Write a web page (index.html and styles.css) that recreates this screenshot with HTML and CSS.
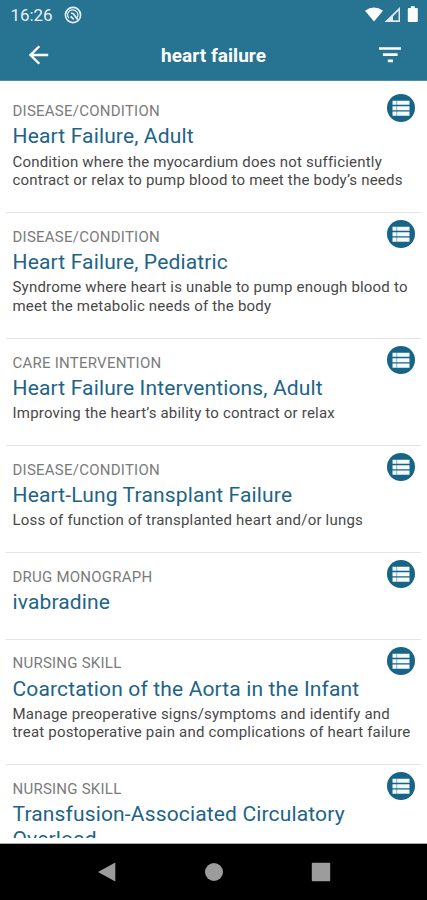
FILE: index.html
```html
<!DOCTYPE html>
<html lang="en">
<head>
<meta charset="utf-8">
<title>heart failure</title>
<link rel="stylesheet" href="styles.css">
</head>
<body>
<svg class="defs" width="0" height="0">
  <symbol id="list" viewBox="0 0 28 28">
    <circle cx="14" cy="14" r="14" fill="#176487"/>
    <path d="M5.5 6.7h17v4.1h-17zM5.5 12.2h17v4h-17zM5.5 17.6h17v4.1h-17z" fill="#f4f9fb"/>
    <path d="M9.7 6.7v15" stroke="#176487" stroke-width=".7" opacity=".65"/>
  </symbol>
</svg>
<div class="phone">
  <header>
    <div class="status">
      <span class="time">16:26</span>
      <svg class="privacy" viewBox="0 0 18 18" fill="none" stroke="#e8f2f6"><circle cx="9" cy="9" r="7.6" stroke-width="1.6"/><path d="M4.9 12.2A5 5 0 0 1 12.3 5.4a5 5 0 0 1 .9 6.2" stroke-width="1.2"/><path d="M7 7.4q2-.6 3.2 1.4l3.4 4.6M6.6 10.4l3.2 3" stroke-width="1.7"/></svg>
      <svg class="signals" viewBox="0 0 54 18" fill="#fff"><path d="M0 4.7Q9 -1.8 18 4.7L9 15.5z"/><path fill-rule="evenodd" d="M19.5 16L35 1v15zM28 14.3h5.5V4.8l-5.5 5.6z" opacity=".85"/><path d="M43.8 2h2V.3h4V2h2q1 0 1 1v12q0 1-1 1h-8q-1 0-1-1V3q0-1 1-1z"/></svg>
    </div>
    <div class="bar">
      <svg class="back" viewBox="0 0 20 20" fill="none" stroke="#fff" stroke-width="2.3"><path d="M19.2 10H2M10.3 1.2L1.5 10l8.8 8.8"/></svg>
      <h1>heart failure</h1>
      <svg class="filter" viewBox="0 0 23 16" fill="#fff"><path d="M0 0h23v2.6H0zM4 6.3h15v2.6H4zM9 12.6h5.3v2.7H9z"/></svg>
    </div>
  </header>
  <main>
    <article><svg class="badge"><use href="#list"/></svg><div class="cat">DISEASE/CONDITION</div><h2>Heart Failure, Adult</h2><p>Condition where the myocardium does not sufficiently<br>contract or relax to pump blood to meet the body’s needs</p></article>
    <article><svg class="badge"><use href="#list"/></svg><div class="cat">DISEASE/CONDITION</div><h2>Heart Failure, Pediatric</h2><p>Syndrome where heart is unable to pump enough blood to<br>meet the metabolic needs of the body</p></article>
    <article><svg class="badge"><use href="#list"/></svg><div class="cat">CARE INTERVENTION</div><h2>Heart Failure Interventions, Adult</h2><p>Improving the heart’s ability to contract or relax</p></article>
    <article><svg class="badge"><use href="#list"/></svg><div class="cat">DISEASE/CONDITION</div><h2>Heart-Lung Transplant Failure</h2><p>Loss of function of transplanted heart and/or lungs</p></article>
    <article><svg class="badge"><use href="#list"/></svg><div class="cat">DRUG MONOGRAPH</div><h2>ivabradine</h2></article>
    <article><svg class="badge"><use href="#list"/></svg><div class="cat">NURSING SKILL</div><h2>Coarctation of the Aorta in the Infant</h2><p>Manage preoperative signs/symptoms and identify and<br>treat postoperative pain and complications of heart failure</p></article>
    <article><svg class="badge"><use href="#list"/></svg><div class="cat">NURSING SKILL</div><h2>Transfusion-Associated Circulatory<br>Overload</h2></article>
  </main>
  <div class="gap"></div>
  <nav>
    <svg viewBox="0 0 20 20" fill="#9c9c9c"><path d="M1 10L18.3 .5v19z"/></svg>
    <svg viewBox="0 0 20 20" fill="#9c9c9c"><circle cx="10" cy="10" r="9"/></svg>
    <svg viewBox="0 0 20 20" fill="#9c9c9c"><rect x=".8" y=".8" width="18.4" height="18.4" rx="1"/></svg>
  </nav>
</div>
</body>
</html>
```
FILE: styles.css
```css
* { box-sizing: border-box; margin: 0; }
body { background: #fff; font-family: Roboto, "Liberation Sans", sans-serif; }
.defs { display: block; }
.phone { width: 427px; height: 900px; display: flex; flex-direction: column; overflow: hidden; }
header { height: 81px; flex: none; background: #267392; color: #fff; border-bottom: 1px solid #4f8ca6; }
.status { height: 30px; padding: 0 8px 0 10.5px; display: flex; align-items: center; }
.time { font-size: 17px; width: 43px; color: #e8f2f6; letter-spacing: -.1px; white-space: nowrap; }
.privacy { width: 18px; height: 18px; margin-left: 10.5px; }
.signals { width: 54px; height: 18px; margin-left: auto; }
.bar { height: 50px; display: grid; grid-template-columns: 60px 1fr 60px; align-items: center; }
.back { width: 20px; height: 20px; margin-left: 29px; }
h1 { font-size: 19px; line-height: 24px; font-weight: 700; text-align: center; letter-spacing: .05px; padding-top: 1px; }
.filter { width: 22.5px; height: 16px; margin-left: 11.5px; }
main { flex: none; height: 757px; padding: 6.4px 6px 0; overflow: hidden; }
article { position: relative; padding: 15.8px 6px 22.5px 6.5px; border-bottom: 1px solid #e4e4e4; }
.badge { position: absolute; top: 7px; right: 6px; width: 28px; height: 28px; }
.cat { font-size: 15px; line-height: 17px; color: #7b7b7b; white-space: nowrap; letter-spacing: .24px; }
h2 { padding: 4.2px 0 1.3px; font-size: 21px; line-height: 24.5px; font-weight: 400; color: #1d6487; white-space: nowrap; letter-spacing: .15px; }
p { margin-top: 2.6px; font-size: 15px; line-height: 18.4px; color: #484848; white-space: nowrap; letter-spacing: .2px; }
.gap { height: 6px; flex: none; background: #fff; border-bottom: 1px solid #aaa; }
nav { flex: 1; background: #000; display: flex; justify-content: center; gap: 87px; padding-top: 18px; }
nav svg { width: 20px; height: 20px; }
```
